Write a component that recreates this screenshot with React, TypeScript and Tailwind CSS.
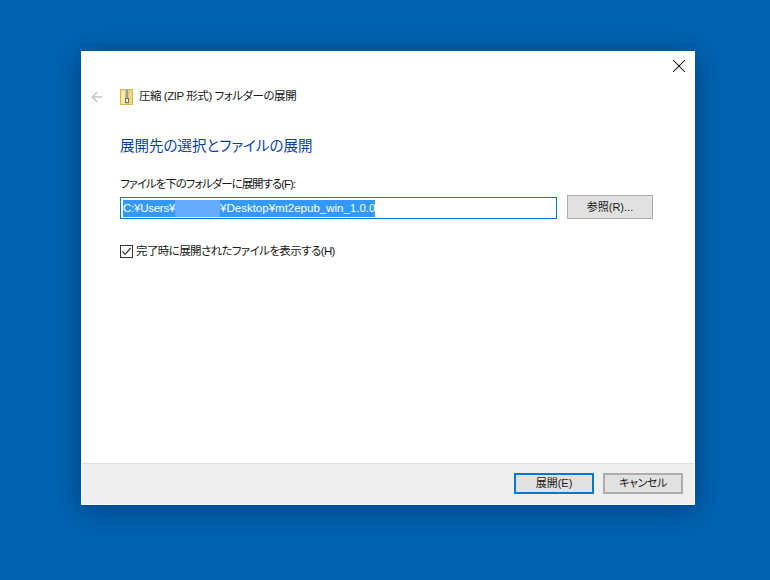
import { ArrowLeft, X } from "lucide-react";

const font = "font-['Liberation_Sans','Noto_Sans_CJK_JP',sans-serif]";

function ZipIcon() {
  return (
    <svg width="13" height="16" viewBox="0 0 13 16" className="shrink-0">
      <rect x="0.5" y="0.5" width="12" height="15" fill="#f5d86f" stroke="#dcb64a" />
      <rect x="1.5" y="1.5" width="3" height="13" fill="#fbeeb0" />
      <rect x="5" y="1" width="4" height="14" fill="#c8c8c2" />
      <path d="M6 2h2M6 4h2M6 6h2M6 8h2" stroke="#74746c" strokeWidth="1" />
      <rect x="5.5" y="9.5" width="3" height="4" fill="#f2f2ee" stroke="#6f6f68" />
    </svg>
  );
}

function DialogButton({ label, primary }: { label: string; primary?: boolean }) {
  return (
    <button
      className={
        primary
          ? "h-[21px] w-[80px] border-2 border-[#0078d7] bg-[#e1e1e1] text-[11px] text-[#1a1a1a] [font-feature-settings:'palt']"
          : "h-[21px] w-[80px] border-2 border-[#adadad] bg-[#e1e1e1] text-[11px] tracking-[-0.4px] text-[#1a1a1a] [font-feature-settings:'palt']"
      }
    >
      {label}
    </button>
  );
}

export default function App() {
  return (
    <div className={`h-[580px] w-[770px] overflow-hidden bg-[#0063b1] pl-[81px] pt-[51px] ${font}`}>
      <div className="flex h-[454px] w-[614px] flex-col border border-white bg-white shadow-[0_4px_28px_rgba(0,20,60,0.45)]">
        <div className="flex h-[29px] items-start justify-end pr-[4px] pt-[3px]">
          <X size={22} strokeWidth={1.1} className="text-black" />
        </div>
        <div className="flex items-center pl-[7px] pt-[7px]">
          <ArrowLeft size={16} strokeWidth={2} className="text-[#c4c4c4]" />
          <div className="ml-[15px] flex items-center gap-[6px]">
            <ZipIcon />
            <span className="text-[11.5px] tracking-[-0.45px] text-[#1a1a1a] [font-feature-settings:'palt']">
              圧縮 (ZIP 形式) フォルダーの展開
            </span>
          </div>
        </div>
        <div className="flex flex-1 flex-col pl-[38px] pr-[41px]">
          <h1 className="mt-[30px] text-[14.5px] leading-[22px] font-normal text-[#0a3fa8] [font-feature-settings:'palt']">
            展開先の選択とファイルの展開
          </h1>
          <label className="mt-[18px] text-[11.5px] leading-[18px] tracking-[-1.05px] text-[#1a1a1a] [font-feature-settings:'palt']">
            ファイルを下のフォルダーに展開する(F):
          </label>
          <div className="mt-[2px] flex items-end gap-[10px]">
            <div className="flex h-[22px] w-[437px] items-center border border-[#0078d7] px-[2px] text-[11.5px]">
              <span className="flex h-[17px] items-center bg-[#3399ff] text-white">
                <span className="tracking-[-0.25px]">C:¥Users¥</span>
                <span className="h-full w-[45px] bg-[#66aaff]" />
                ¥Desktop¥mt2epub_win_1.0.0
              </span>
            </div>
            <button className="h-[24px] w-[86px] border border-[#adadad] bg-[#e1e1e1] text-[11px] text-[#1a1a1a]">
              参照(R)...
            </button>
          </div>
          <div className="mt-[24px] flex items-center gap-[3px]">
            <span className="flex h-[13px] w-[13px] items-center justify-center border border-[#333333] bg-white">
              <svg width="11" height="11" viewBox="0 0 11 11">
                <path d="M1.5 5.5 4.2 8.4 9.6 2" fill="none" stroke="#333333" strokeWidth="1.2" />
              </svg>
            </span>
            <span className="text-[11.5px] tracking-[-0.6px] text-[#1a1a1a] [font-feature-settings:'palt']">
              完了時に展開されたファイルを表示する(H)
            </span>
          </div>
        </div>
        <div className="flex h-[41px] items-start justify-end gap-[9px] border-t border-[#dfdfdf] bg-[#efefef] pr-[11px] pt-[9px]">
          <DialogButton label="展開(E)" primary />
          <DialogButton label="キャンセル" />
        </div>
      </div>
    </div>
  );
}
